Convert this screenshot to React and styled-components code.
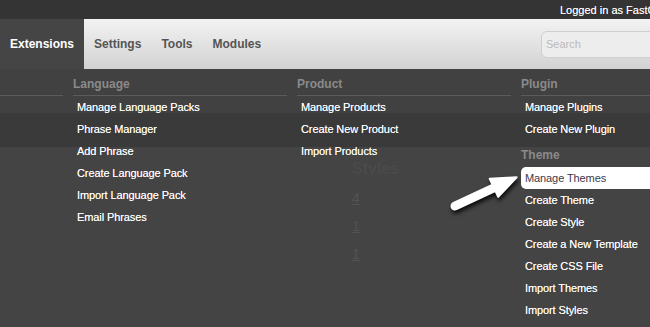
import styled, { createGlobalStyle } from 'styled-components';

const GlobalStyle = createGlobalStyle`
    html, body {
        margin: 0;
        padding: 0;
        overflow: hidden;
        background: #444444;
    }
    body {
        font-family: "Liberation Sans", Arial, sans-serif;
    }
`

const columns = [
    {
        title: "Language",
        items: [
            "Manage Language Packs",
            "Phrase Manager",
            "Add Phrase",
            "Create Language Pack",
            "Import Language Pack",
            "Email Phrases"
        ]
    },
    {
        title: "Product",
        items: ["Manage Products", "Create New Product", "Import Products"]
    },
    {
        title: "Plugin",
        items: ["Manage Plugins", "Create New Plugin"],
        extra: {
            title: "Theme",
            items: [
                "Manage Themes",
                "Create Theme",
                "Create Style",
                "Create a New Template",
                "Create CSS File",
                "Import Themes",
                "Import Styles"
            ]
        }
    }
];

function Arrow() {
    return (
        <ArrowSvg width="90" height="60" viewBox="0 0 90 60">
            <g transform="translate(15 46) rotate(-25)" fill="#ffffff" stroke="#ffffff">
                <line x1="0" y1="0" x2="48" y2="0" strokeWidth="9" strokeLinecap="round" />
                <polygon points="43,-10 68,0 43,10" strokeWidth="2" strokeLinejoin="round" />
            </g>
        </ArrowSvg>
    );
}

function Column({ title, items, extra }) {
    return (
        <Col>
            <Header $divider>{title}</Header>
            {items.map(item => <Item key={item}>{item}</Item>)}
            {extra && (
                <>
                    <Header>{extra.title}</Header>
                    {extra.items.map(item =>
                        <Item key={item} $active={item === "Manage Themes"}>{item}</Item>
                    )}
                </>
            )}
        </Col>
    );
}

export default function App() {
    return (
        <Page>
            <GlobalStyle />
            <TopBar>
                <span>Logged in as FastComet</span>
            </TopBar>
            <Nav>
                <Tab $active>Extensions</Tab>
                <Tab>Settings</Tab>
                <Tab>Tools</Tab>
                <Tab>Modules</Tab>
                <Search placeholder="Search" />
            </Nav>
            <Body>
                <Behind>
                    <TopStrip />
                    <Band />
                    <Content>
                        <StylesTitle>Styles</StylesTitle>
                        <Count>4</Count>
                        <Count>1</Count>
                        <Count>1</Count>
                    </Content>
                </Behind>
                <Menu>
                    <Col>
                        <Header $divider>&nbsp;</Header>
                    </Col>
                    {columns.map(col => <Column key={col.title} {...col} />)}
                </Menu>
                <Arrow />
            </Body>
        </Page>
    );
}

const Page = styled.div`
    width: 760px;
    height: 327px;
    display: flex;
    flex-direction: column;
    background: #444444;
`

const TopBar = styled.div`
    height: 19px;
    background: #343434;
    display: flex;
    align-items: center;
    padding-left: 560px;
    color: #ffffff;
    font-size: 11px;
    white-space: nowrap;
    text-shadow: 0 0 0.6px rgba(255, 255, 255, 0.6);
`

const Nav = styled.div`
    height: 50px;
    display: flex;
    align-items: center;
    background: linear-gradient(#f3f3f3, #d2d2d2);
    padding-right: 20px;
`

const Tab = styled.div`
    height: 100%;
    display: flex;
    align-items: center;
    padding: 0 10px;
    font-size: 12px;
    font-weight: bold;
    color: ${props => props.$active ? "#ffffff" : "#555555"};
    background: ${props => props.$active ? "#454545" : "transparent"};
`

const Search = styled.input`
    margin-left: auto;
    width: 199px;
    height: 27px;
    box-sizing: border-box;
    border: 1px solid #cfcfcf;
    border-radius: 6px;
    background: #ededed;
    padding: 0 4px;
    font-family: "Liberation Sans", Arial, sans-serif;
    font-size: 11px;
    outline: none;

    &::placeholder {
        color: #bbbbbb;
    }
`

const Body = styled.div`
    flex: 1;
    position: relative;
    overflow: hidden;
`

const Behind = styled.div`
    display: flex;
    flex-direction: column;
`

const TopStrip = styled.div`
    height: 44px;
    background: #414141;
`

const Band = styled.div`
    height: 34px;
    background: #3a3a3a;
`

const Content = styled.div`
    display: flex;
    flex-direction: column;
    padding: 13px 0 0 352px;
    gap: 12px;
`

const StylesTitle = styled.div`
    font-size: 16px;
    font-weight: bold;
    color: #4a4a4a;
    line-height: 18px;
`

const Count = styled.div`
    font-size: 14px;
    line-height: 16px;
    color: #535353;
    text-decoration: underline;
`

const Menu = styled.div`
    position: absolute;
    inset: 0;
    display: grid;
    grid-template-columns: 63px repeat(3, 214px);
    column-gap: 10px;
    align-items: start;
`

const Col = styled.div`
    display: flex;
    flex-direction: column;
`

const Header = styled.div`
    padding: 7px 0 ${props => props.$divider ? "3px" : "4px"};
    line-height: 16px;
    font-size: 12px;
    font-weight: bold;
    color: #8a8a8a;
    border-bottom: ${props => props.$divider ? "1px solid #5c5c5c" : "none"};
`

const Item = styled.div`
    height: 22px;
    line-height: 22px;
    padding-left: 4px;
    font-size: 11px;
    letter-spacing: -0.1px;
    white-space: nowrap;
    color: ${props => props.$active ? "#3a3a4c" : "#ffffff"};
    background: ${props => props.$active ? "#ffffff" : "transparent"};
    border-radius: ${props => props.$active ? "5px" : "0"};
    text-shadow: ${props => props.$active ? "none" : "0 0 0.6px rgba(255, 255, 255, 0.7)"};
`

const ArrowSvg = styled.svg`
    position: absolute;
    left: 440px;
    top: 91px;
    filter: drop-shadow(1px 3px 2px rgba(0, 0, 0, 0.85));
`
